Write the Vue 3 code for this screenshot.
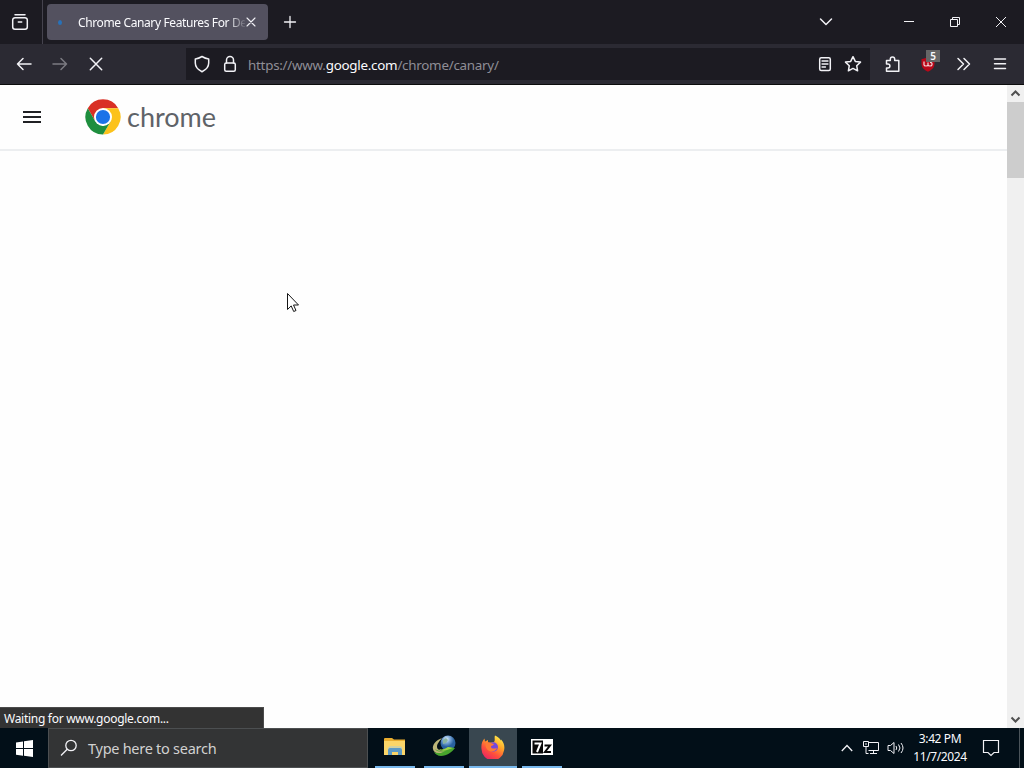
<template>
  <div class="desktop">
    <div class="tabs">
      <div class="firefox-view">
        <svg width="18" height="18" viewBox="0 0 18 18" class="line">
          <path d="M4 1.700h10M1.700 7a2.300 2.300 0 0 1 2.300-2.300h10a2.300 2.300 0 0 1 2.300 2.300v7a2.200 2.200 0 0 1-2.200 2.200H3.900A2.200 2.200 0 0 1 1.700 14zM7.300 9h3.400" />
        </svg>
      </div>
      <div class="tab">
        <span class="loading"></span>
        <span class="tab-title">Chrome Canary Features For De</span>
        <svg class="line tab-close" width="10" height="10" viewBox="0 0 10 10"><path d="m1 1 8 8M9 1 1 9" /></svg>
      </div>
      <svg class="line new-tab" width="14" height="14" viewBox="0 0 14 14"><path d="M7 1.500v11M1.500 7h11" /></svg>
      <svg class="line all-tabs" width="14" height="10" viewBox="0 0 14 10"><path d="m1.500 2 5.500 5.500L12.500 2" /></svg>
      <div class="window-buttons">
        <svg class="thin" width="46" height="44" viewBox="0 0 46 44"><path d="M18 21.500h10" /></svg>
        <svg class="thin" width="46" height="44" viewBox="0 0 46 44"><path d="M18.500 19.500h7v7h-7zM20.500 19v-1.500h7v7H26" /></svg>
        <svg class="thin" width="46" height="44" viewBox="0 0 46 44"><path d="m18 17 10 10M28 17 18 27" /></svg>
      </div>
    </div>

    <div class="toolbar">
      <div class="nav-buttons">
        <svg class="line" width="36" height="40" viewBox="0 0 36 40"><path d="M11.500 20H25M17 14.500 11.500 20l5.500 5.500" /></svg>
        <svg class="line disabled" width="36" height="40" viewBox="0 0 36 40"><path d="M11 20h13.500M19 14.500l5.500 5.500-5.500 5.500" /></svg>
        <svg class="line" width="36" height="40" viewBox="0 0 36 40"><path d="m12.300 14.300 11.400 11.400M23.700 14.300 12.300 25.700" /></svg>
      </div>
      <div class="urlbar">
        <svg class="line" width="28" height="34" viewBox="0 0 28 34">
          <path d="M14 9.500c2.300 1.400 4.400 2.100 6.700 2.400v4.200c0 3.700-2.500 6.700-6.700 8.600-4.200-1.900-6.700-4.900-6.700-8.600v-4.200c2.300-.3 4.400-1 6.700-2.400z" />
        </svg>
        <svg class="line" width="28" height="34" viewBox="0 0 28 34">
          <rect x="8.700" y="16" width="10.600" height="8.200" rx="1.500" />
          <path d="M10.500 16v-3a3.500 3.500 0 0 1 7 0v3" />
        </svg>
        <div class="url">https://www.<b>google.com</b>/chrome/canary/</div>
        <svg class="line" width="28" height="34" viewBox="0 0 28 34">
          <rect x="8.700" y="10.700" width="10.600" height="12.800" rx="1.500" />
          <path d="M11 14h6M11 17h6M11 20h3.500" stroke-width="1.300" />
        </svg>
        <svg class="line" width="28" height="34" viewBox="0 0 28 34">
          <path d="m14 9.700 2.300 4.700 5.200.7-3.800 3.600.9 5.100-4.600-2.400-4.600 2.400.9-5.100-3.800-3.600 5.200-.7z" />
        </svg>
      </div>
      <div class="actions">
        <svg class="line" width="36" height="40" viewBox="0 0 36 40">
          <path d="M12.500 20v-3.500h3.800v-1.300a2.200 2.200 0 0 1 4.400 0v1.300h4.100v10.800H12.500v-3.300h1.400a2 2 0 0 0 0-4z" />
        </svg>
        <div class="ublock">
          <svg width="36" height="40" viewBox="0 0 36 40">
            <path d="M18 13c2 1.200 4 1.700 6.500 2v4.700c0 3.700-2.500 6-6.500 8-4-2-6.500-4.300-6.500-8V15c2.500-.3 4.500-.8 6.500-2z" fill="#b80819" />
            <path d="M14 17.500v3.200q0 1.300 2 1.300t2-1.300v-2.200M18 20.700q0 1.300 2 1.300t2-1.300v-1.200q0-1.200-2-1.200" fill="none" stroke="#f5d9dc" stroke-width="1.200" />
          </svg>
          <span class="badge">5</span>
        </div>
        <svg class="line" width="36" height="40" viewBox="0 0 36 40"><path d="m12 14.500 5.500 5.500-5.500 5.500M18 14.500l5.500 5.500-5.500 5.500" /></svg>
        <svg class="line" width="36" height="40" viewBox="0 0 36 40"><path d="M12.500 15h11M12.500 19.700h11M12.500 24.400h11" /></svg>
      </div>
    </div>

    <div class="viewport">
      <div class="page">
        <header class="site-header">
          <div class="hamburger"><i></i><i></i><i></i></div>
          <svg class="chrome-logo" width="36" height="36" viewBox="0 0 36 36">
            <path d="M2.800 9.200A17.500 17.500 0 0 1 33.200 9.200H18l-7.600 13.200z" fill="#d93025" />
            <path d="M33.200 9.200A17.500 17.500 0 0 1 18 35.500l7.600-13.100L18 9.200z" fill="#fcc21b" />
            <path d="M18 35.500A17.500 17.500 0 0 1 2.800 9.200l7.600 13.200L18 27l7.600-4.600z" fill="#1e8e3e" />
            <circle cx="18" cy="18" r="9" fill="#fff" />
            <circle cx="18" cy="18" r="7.100" fill="#1a73e8" />
          </svg>
          <span class="brand">chrome</span>
        </header>
        <svg class="cursor" width="14" height="21" viewBox="0 0 14 21">
          <path d="M1.500 1.500v16l3.700-3.600 2.500 5.600 2.300-1-2.500-5.500h5z" fill="#fff" stroke="#151515" />
        </svg>
        <div class="status">Waiting for www.google.com...</div>
      </div>
      <div class="scrollbar">
        <svg width="17" height="17" viewBox="0 0 17 17"><path d="m4.500 10.500 4-4 4 4" /></svg>
        <div class="thumb"></div>
        <svg width="17" height="17" viewBox="0 0 17 17"><path d="m4.500 6.500 4 4 4-4" /></svg>
      </div>
    </div>

    <div class="taskbar">
      <div class="start">
        <svg width="17" height="17" viewBox="0 0 17 17"><path d="M0 2.400 7 1.400v6.600H0zM8 1.200 17 0v8H8zM0 9h7v6.700l-7-1zM8 9h9v8l-9-1.200z" fill="#fff" /></svg>
      </div>
      <div class="search">
        <svg class="thin" width="18" height="18" viewBox="0 0 18 18"><circle cx="11" cy="6.500" r="5.200" stroke-width="1.300" /><path d="M7.200 10.200 1 16.500" stroke-width="1.300" /></svg>
        <span>Type here to search</span>
      </div>
      <div class="apps">
        <div class="app">
          <svg width="24" height="22" viewBox="0 0 24 22">
            <path d="M1 3q0-1 1-1h7l2 1.500h11v4H1z" fill="#e9ad2f" />
            <path d="M1 5h21v14H1z" fill="#fbd568" />
            <path d="M5 19v-5q0-2 2-2h10q2 0 2 2v5h-4v-3H9v3z" fill="#5c9ac6" />
            <path d="M5 12.500q1-1.500 2-1.500h10q2 0 2 1.500" fill="none" stroke="#a7cddb" />
          </svg>
        </div>
        <div class="app">
          <svg width="24" height="24" viewBox="0 0 24 24">
            <defs>
              <radialGradient id="globe" cx=".4" cy=".25"><stop offset="0" stop-color="#e4f3ff" /><stop offset=".5" stop-color="#7aa6d6" /><stop offset="1" stop-color="#28619f" /></radialGradient>
            </defs>
            <path d="M10 3C4 5 0 10 1 14c1 5 8 6 13 4l-1-3c-4 1-8 0-8-3 0-4 3-6 5-9z" fill="#bcb578" />
            <circle cx="16" cy="8" r="7.500" fill="url(#globe)" />
            <path d="m11 5 3-2 2 2-2 3-3 1z" fill="#8bb5a0" />
            <path d="M3 14c4 3 9 2 13-2l7 1c-3 4-8 8-14 8-3 0-6-2-7-4 4 2 8 1 11-1-4 1-8 1-10-2z" fill="#47a52d" />
            <path d="M7 14c3 1 6 0 9-2l5 1-6 2c-3 1-6 1-8-1z" fill="#9bd34a" />
          </svg>
        </div>
        <div class="app active">
          <svg width="24" height="24" viewBox="0 0 24 24">
            <defs>
              <linearGradient id="flame" x1=".8" y1="0" x2=".2" y2="1"><stop offset="0" stop-color="#fff34f" /><stop offset=".35" stop-color="#ffa328" /><stop offset=".65" stop-color="#ff503c" /><stop offset="1" stop-color="#e71e68" /></linearGradient>
            </defs>
            <path d="M14 .5c2 1 4 2 6 5V4.500c3 3 4 7 3 11A11.300 11.300 0 0 1 .5 14C0 10 1 6 3.500 3.500l.5 3L7 5v3l6-1c1.500-2 0-4 1-6.500z" fill="url(#flame)" />
            <circle cx="12.300" cy="12" r="4.700" fill="#7548dc" />
            <path d="M6 7c3 0 4 1.500 7 2-1 2-3 1.500-3 2.700 0 2 3 2.600 6 1-1 4.600-9 5.300-11-.2C4 10 5 8 6 7z" fill="#ff7a35" />
          </svg>
        </div>
        <div class="app">
          <svg width="22" height="16" viewBox="0 0 22 16">
            <path d="M0 0h22v16H0z" fill="#fff" />
            <path d="M1.500 1.500h10.500v13H1.500z" fill="#080808" />
            <path d="M3.500 4.500h6l-3.500 8.500" fill="none" stroke="#fff" stroke-width="2" />
            <path d="M13.500 6.500h5.500l-5 6.500h6" fill="none" stroke="#080808" stroke-width="2" />
          </svg>
        </div>
      </div>
      <div class="tray">
        <svg class="thin" width="12" height="8" viewBox="0 0 12 8"><path d="m.8 7 5.200-5.500L11.200 7" stroke-width="1.300" /></svg>
        <svg class="thin" width="17" height="16" viewBox="0 0 17 16"><path d="M5.500 2.500h10v8h-10M.5 1.500h5v5h-5zM3 3v2M3 6.500v7h2.500M10.500 10.500v3M7 13.500h7" /></svg>
        <svg class="thin" width="18" height="14" viewBox="0 0 18 14"><path d="M1 4.500h2.500L7 1.500v11L3.500 9.500H1zM9 5q1.500 2 0 4M11.500 3.500q3 3.500 0 7M14 2q4 5 0 10" /></svg>
        <div class="clock"><div class="time">3:42 PM</div><div class="date">11/7/2024</div></div>
        <svg class="thin" width="18" height="18" viewBox="0 0 18 18"><path d="M1.500 1.500h15v12H12L9 16.500 6 13.500H1.500z" stroke-width="1.200" /></svg>
        <span class="show-desktop"></span>
      </div>
    </div>
  </div>
</template>

<script setup>
</script>

<style>
body {
  margin: 0;
  overflow: hidden;
}
</style>

<style scoped>
.desktop {
  width: 1024px;
  height: 768px;
  display: flex;
  flex-direction: column;
  overflow: hidden;
  font-family: "Noto Sans", "Open Sans", sans-serif;
  color: #fbfbfe;
  cursor: default;
}
svg {
  display: block;
  flex-shrink: 0;
}
.line,
.thin {
  fill: none;
  stroke: #f2f2f6;
  stroke-width: 1.5;
  stroke-linecap: round;
  stroke-linejoin: round;
}
.thin {
  stroke-width: 1;
  stroke-linecap: butt;
  stroke-linejoin: miter;
}
.tabs {
  height: 44px;
  display: flex;
  align-items: center;
  background: #1c1b22;
}
.firefox-view {
  width: 43px;
  height: 44px;
  box-sizing: border-box;
  padding-left: 11px;
  display: flex;
  align-items: center;
  border-right: 1px solid #45434e;
}
.tab {
  width: 221px;
  height: 36px;
  margin-left: 4px;
  box-sizing: border-box;
  padding-left: 11px;
  display: flex;
  align-items: center;
  border-radius: 4px;
  background: #53515f;
}
.loading {
  width: 4px;
  height: 5px;
  margin-right: 16px;
  border-radius: 50%;
  background: #2871b8;
}
.tab-title {
  width: 167px;
  white-space: nowrap;
  font-size: 12px;
  letter-spacing: -0.38px;
  mask-image: linear-gradient(to right, #000 150px, transparent 169px);
}
.tab-close {
  margin-left: 1px;
  stroke-width: 1.1;
}
.new-tab {
  margin-left: 15px;
  stroke-width: 1.3;
}
.all-tabs {
  margin-left: 522px;
}
.window-buttons {
  margin-left: auto;
  display: flex;
}
.toolbar {
  height: 41px;
  box-sizing: border-box;
  display: flex;
  border-bottom: 1px solid #0c0c0d;
  background: #2b2a33;
}
.nav-buttons {
  width: 180px;
  padding-left: 6px;
  display: flex;
}
.disabled {
  opacity: 0.4;
}
.urlbar {
  width: 684px;
  height: 32px;
  margin-top: 4px;
  box-sizing: border-box;
  padding: 0 3px 0 2px;
  display: flex;
  align-items: center;
  background: #1c1b22;
}
.url {
  flex: 1;
  padding: 1px 0 0 4px;
  font-size: 13.4px;
  letter-spacing: -0.26px;
  color: #8f8e96;
}
.url b {
  font-weight: 400;
  color: #fbfbfe;
}
.actions {
  margin-left: auto;
  padding-right: 6px;
  display: flex;
}
.ublock {
  position: relative;
}
.badge {
  position: absolute;
  top: 6px;
  left: 16px;
  width: 14px;
  height: 12px;
  background: #666;
  font-size: 10px;
  font-weight: 600;
  line-height: 12px;
  text-align: center;
}
.viewport {
  height: 643px;
  display: flex;
}
.page {
  position: relative;
  width: 1007px;
  background: #fefefe;
}
.site-header {
  height: 66px;
  box-sizing: border-box;
  padding-left: 23px;
  display: flex;
  align-items: center;
  border-bottom: 2px solid #eceef0;
}
.hamburger {
  width: 18px;
  height: 12px;
  display: flex;
  flex-direction: column;
  justify-content: space-between;
}
.hamburger i {
  height: 2px;
  background: #202124;
}
.chrome-logo {
  margin-left: 44px;
}
.brand {
  margin-left: 6px;
  font-family: Lato, sans-serif;
  font-size: 27px;
  line-height: 32px;
  color: #5f6368;
}
.cursor {
  position: absolute;
  top: 207px;
  left: 286px;
}
.status {
  position: absolute;
  bottom: 0;
  left: 0;
  width: 264px;
  height: 21px;
  box-sizing: border-box;
  padding-left: 4px;
  border-top: 1px solid #4b4b4b;
  border-right: 1px solid #4b4b4b;
  background: #333;
  font-size: 12px;
  line-height: 21px;
  letter-spacing: -0.28px;
  white-space: nowrap;
}
.scrollbar {
  width: 17px;
  display: flex;
  flex-direction: column;
  background: #f0f0f0;
}
.scrollbar path {
  fill: none;
  stroke: #505050;
  stroke-width: 2;
}
.thumb {
  height: 76px;
  margin-bottom: auto;
  background: #cdcdcd;
}
.taskbar {
  height: 40px;
  display: flex;
  background: #020f18;
}
.start {
  width: 48px;
  display: flex;
  align-items: center;
  justify-content: center;
}
.search {
  width: 320px;
  box-sizing: border-box;
  padding-left: 11px;
  display: flex;
  align-items: center;
  gap: 10px;
  border: 1px solid #4c4f51;
  background: #333435;
  color: #d1d1d1;
  font-size: 14.5px;
  letter-spacing: -0.27px;
}
.apps {
  margin-left: 3px;
  display: flex;
  gap: 1px;
}
.app {
  width: 40px;
  height: 38px;
  margin: 0 4px;
  display: flex;
  align-items: center;
  justify-content: center;
  border-bottom: 2px solid #78b8ed;
}
.app.active {
  width: 48px;
  margin: 0;
  background: #394750;
}
.tray {
  margin-left: auto;
  display: flex;
  align-items: center;
}
.tray > svg:nth-child(2) {
  margin-left: 10px;
}
.tray > svg:nth-child(3) {
  margin-left: 7px;
}
.clock {
  width: 70px;
  height: 40px;
  margin-right: 7px;
  box-sizing: border-box;
  padding-top: 2px;
  display: flex;
  flex-direction: column;
  align-items: center;
  font-size: 12px;
  line-height: 18px;
  letter-spacing: -0.4px;
  white-space: nowrap;
}
.show-desktop {
  width: 4px;
  height: 40px;
  margin-left: 19px;
  border-left: 1px solid #4b545a;
}
</style>
